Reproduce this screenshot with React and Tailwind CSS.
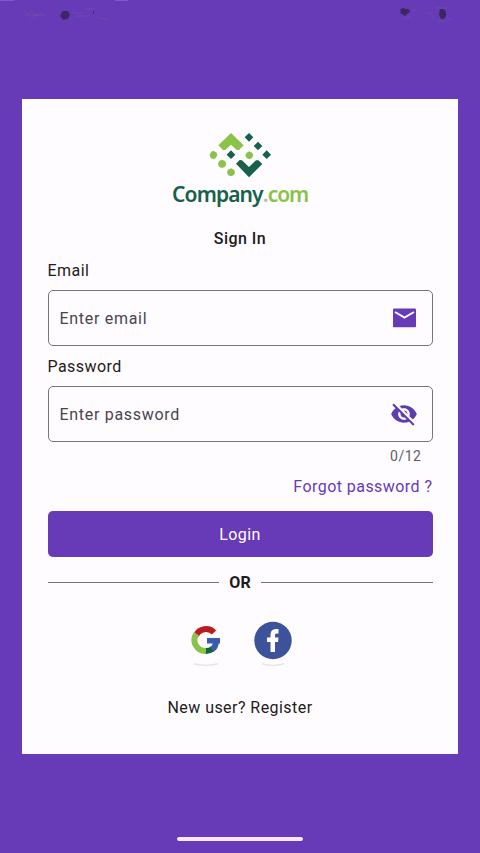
import React from "react";

function StatusBar() {
  return (
    <div className="flex h-[99px] w-full items-start">
      <svg className="h-[30px] w-[480px]" viewBox="0 0 480 30" aria-hidden="true">
        <path d="M0 .5h14M115 .5h13" stroke="#7d59d2" />
        <path d="M23 10l5 4 4-3 5 5 5-4M25 15h20M30 19l5-4M72 13h11M76 16h14M86 9h8M97 17l12 3M412 10h4M425 13h6l3 6M436 8h11M448 19h4M410 16l-5 3M437 21h10" fill="none" stroke="#74649b" strokeWidth="1" opacity=".45" />
        <path d="M62.500 11h5l2.500 3.500-2 4-4.500 1.500-3.500-4z" fill="#3b2762" />
        <path d="M93.500 11v3" stroke="#44297c" />
        <path d="M400.500 9l3-1 2 1h3l1.500 3-3.500 2-1.500 2-4.500-3z" fill="#3b2762" />
        <path d="M440 9h4l2 3v4l-2 3h-3l-2-4z" fill="#3b2762" />
      </svg>
    </div>
  );
}

function Logo() {
  return (
    <div className="flex flex-col items-center">
      <svg className="h-12 w-16" viewBox="144 36 192 144" aria-hidden="true">
        <g fill="#8bc34a">
          <path d="M213 39l38 37-14 14h-7l-17-16-17 16h-7l-14-14z" />
          <path d="M160 92l10 6 2 7-5 10-7 2-8-3-3-9 4-9z" />
          <path d="M186 119l9 4 4 9-4 8-9 4-9-4-3-8 3-9z" />
          <path d="M213 145l9 4 3 8-3 8-9 4-9-4-3-8 3-8z" />
          <path d="M268 94l8 4 4 8-4 8-8 4-8-4-4-8 4-8z" />
        </g>
        <g fill="#17604a">
          <path d="M267 39l13 13-13 13-13-13zM294 65l13 13-13 13-13-13zM320 91l13 13-13 13-13-13zM213 91l13 13-13 13-13-13z" />
          <path d="M228 131l11-11 7 1 21 20 21-20h7l12 11-40 40z" />
        </g>
      </svg>
      <div className="-mt-px flex h-[30px] items-center font-['Noto_Sans',sans-serif] text-[21px] font-semibold leading-[30px] text-[#17604a]">
        <span className="tracking-[-0.9px]">Company</span>
        <span className="tracking-[-0.6px] text-[#b4b8b2]">.</span>
        <span className="tracking-[-1.2px] text-[#8bc34a]">com</span>
      </div>
    </div>
  );
}

function Field({ label, placeholder, children }) {
  return (
    <div className="flex flex-col">
      <span className="h-5 text-[16px] leading-5 tracking-[0.45px] text-[#1d1b20]">{label}</span>
      <div className="mt-[9px] flex h-14 items-center justify-between rounded-[5px] border border-[#79747e] pl-[11px] pr-[14px]">
        <span className="pt-0.5 text-[16px] leading-6 tracking-[0.7px] text-[#49454f]">{placeholder}</span>
        {children}
      </div>
    </div>
  );
}

function MailIcon() {
  return (
    <svg className="h-7 w-7" viewBox="0 0 28 28" aria-hidden="true">
      <rect x="3" y="4.500" width="23" height="18.700" rx="1" fill="#673ab7" />
      <path d="M5 8l9.500 5.500L24 8" fill="none" stroke="#fffcff" strokeWidth="2" />
    </svg>
  );
}

function EyeOffIcon() {
  return (
    <svg className="h-7 w-7" viewBox="0 0 24 24" fill="#5e3db0" aria-hidden="true">
      <path d="M12 7c2.760 0 5 2.240 5 5 0 .65-.13 1.260-.36 1.830l2.920 2.920c1.510-1.260 2.700-2.890 3.430-4.750-1.730-4.390-6-7.500-11-7.500-1.400 0-2.740.25-3.980.7l2.160 2.160C10.740 7.130 11.350 7 12 7zM2 4.270l2.280 2.280.46.46C3.080 8.300 1.780 10.020 1 12c1.730 4.390 6 7.500 11 7.500 1.550 0 3.030-.3 4.380-.84l.42.42L19.730 22 21 20.730 3.270 3 2 4.270zM7.530 9.800l1.550 1.550c-.05.21-.08.43-.08.65 0 1.660 1.340 3 3 3 .22 0 .44-.03.65-.08l1.550 1.550c-.67.33-1.410.53-2.200.53-2.760 0-5-2.240-5-5 0-.79.2-1.530.53-2.200zm4.310-.78l3.150 3.150.02-.16c0-1.660-1.340-3-3-3l-.17.01z" />
    </svg>
  );
}

function GoogleIcon() {
  return (
    <svg className="h-[46px] w-[30px]" viewBox="0 0 30 46" aria-hidden="true">
      <g fill="none" strokeWidth="6">
        <path d="M5 14.500A11 11 0 0 1 23 11.500" stroke="#b91c20" />
        <path d="M5.500 12.700A11 11 0 0 0 15.500 30" stroke="#8bc34a" />
        <path d="M15 30a11 11 0 0 0 6.500-2.100" stroke="#126342" />
        <path d="M21 28.300c2.500-1.500 3.800-4.200 4-8" stroke="#3b5bb0" />
      </g>
      <path d="M16 17h13v5.500H16z" fill="#3b5bb0" />
      <path d="M3 42q12 3.500 24 0v1.500q-12 3-24 0" fill="#e5e3e7" />
    </svg>
  );
}

function FacebookIcon() {
  return (
    <svg className="h-[46px] w-10" viewBox="0 0 40 46" aria-hidden="true">
      <path d="M9 42q11 3.500 22 0v1.500q-11 3-22 0" fill="#e5e3e7" />
      <circle cx="20" cy="19.500" r="18.700" fill="#3c539b" />
      <path d="M17.500 31V21H14v-4.500h3.500V14c0-4 2-6 6-6h2v4.500h-1.500c-1.500 0-2 .7-2 2v2h3.500L25 21h-3v10z" fill="#fffcff" />
    </svg>
  );
}

export default function App() {
  return (
    <main className="flex h-[853px] w-[480px] flex-col items-center overflow-hidden bg-[#673ab7] font-[Roboto,sans-serif]">
      <StatusBar />
      <section className="flex h-[655px] w-[436px] shrink-0 flex-col bg-[#fffcff] px-[25.5px] pt-[33px]">
        <Logo />
        <h1 className="mt-5 h-5 text-center text-[16px] font-medium leading-5 tracking-[0.45px] text-[#1d1b20]">Sign In</h1>
        <div className="mt-3 flex flex-col gap-[11px]">
          <Field label="Email" placeholder="Enter email">
            <MailIcon />
          </Field>
          <Field label="Password" placeholder="Enter password">
            <EyeOffIcon />
          </Field>
        </div>
        <span className="mt-1 h-5 pr-[11px] text-right text-[14px] leading-5 tracking-[0.5px] text-[#625d68]">0/12</span>
        <a className="mt-[11px] h-5 text-right text-[16px] leading-5 tracking-[0.45px] text-[#673ab7]">Forgot password ?</a>
        <button className="mt-[14px] h-[46px] shrink-0 rounded-[5px] bg-[#673ab7] pt-0.5 text-[16px] tracking-[0.45px] text-white">Login</button>
        <div className="mt-[15px] flex h-5 items-center gap-[10px]">
          <span className="h-px flex-1 bg-[#77737a]" />
          <span className="pt-0.5 text-[16px] font-bold leading-5 text-[#1d1b20]">OR</span>
          <span className="h-px flex-1 bg-[#77737a]" />
        </div>
        <div className="mt-[29px] flex justify-center gap-8 pl-1">
          <GoogleIcon />
          <FacebookIcon />
        </div>
        <p className="mt-[31px] text-center text-[16px] leading-5 tracking-[0.45px] text-[#1d1b20]">New user? Register</p>
      </section>
      <div className="mt-[83px] h-1 w-[126px] shrink-0 rounded-full bg-[#f7e9fb]" />
    </main>
  );
}
